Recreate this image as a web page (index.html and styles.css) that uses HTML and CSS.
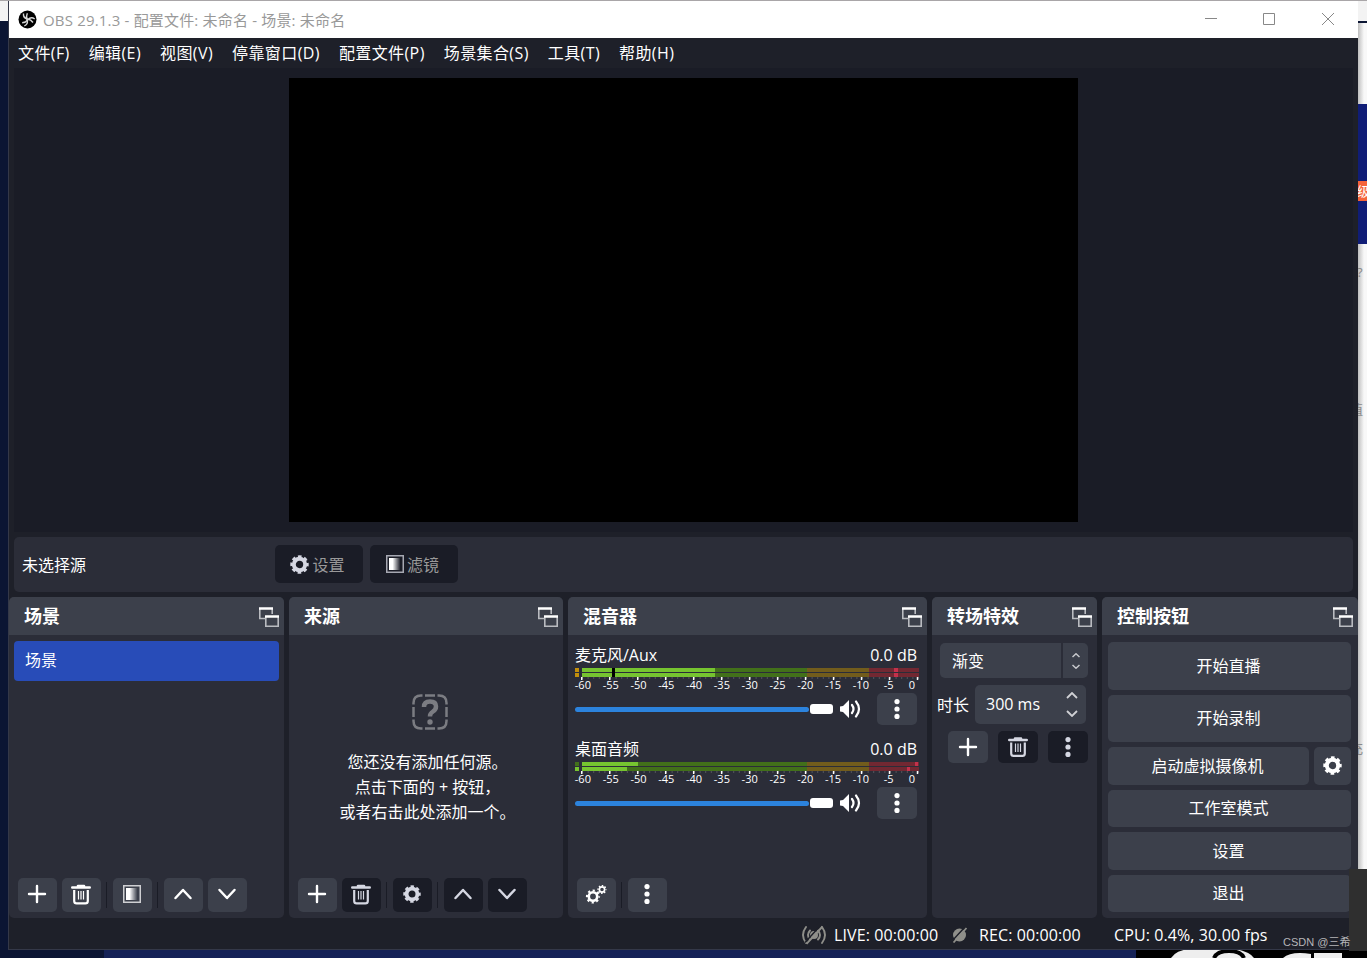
FILE: index.html
```
<!DOCTYPE html>
<html lang="zh-CN">
<head>
    <meta charset="UTF-8">
    <meta name="viewport" content="width=device-width, initial-scale=1.0">
    <title>OBS 29.1.3</title>
    <link rel="stylesheet" href="styles.css">
</head>
<body>
    <svg class="defs" width="0" height="0">
        <defs>
            <linearGradient id="fade" x1="0" x2="1" y1="0" y2="0">
                <stop offset="0.3" stop-color="currentColor"/>
                <stop offset="0.95" stop-color="currentColor" stop-opacity="0"/>
            </linearGradient>
            <symbol id="plus" viewBox="0 0 20 20"><path d="M10 2v16M2 10h16" fill="none" stroke="currentColor" stroke-width="2.4" stroke-linecap="round"/></symbol>
            <symbol id="trash" viewBox="0 0 20 20"><path d="M1.300 3h17.400M7 1.500h6" fill="none" stroke="currentColor" stroke-width="2.600" stroke-linecap="round"/><path d="M3.200 5.500v11q0 2.400 2.400 2.400h8.800q2.400 0 2.400-2.400v-11" fill="none" stroke="currentColor" stroke-width="2.200"/><path d="M7.500 6.500v8.500M10 6.500v8.500M12.500 6.500v8.500" stroke="currentColor" stroke-width="1.200"/></symbol>
            <symbol id="gear" viewBox="0 0 20 20"><circle cx="10" cy="10" r="6" fill="none" stroke="currentColor" stroke-width="4.2"/><circle cx="10" cy="10" r="8.400" fill="none" stroke="currentColor" stroke-width="2.600" stroke-dasharray="3.8 2.797" stroke-dashoffset="1.9"/></symbol>
            <symbol id="gears" viewBox="0 0 22 20"><circle cx="8" cy="12.5" r="4.2" fill="none" stroke="currentColor" stroke-width="2.6"/><circle cx="8" cy="12.5" r="6" fill="none" stroke="currentColor" stroke-width="2.2" stroke-dasharray="2.2 2.512" stroke-dashoffset="1.1"/><circle cx="17" cy="5.5" r="2.6" fill="none" stroke="currentColor" stroke-width="1.6"/><circle cx="17" cy="5.5" r="3.9" fill="none" stroke="currentColor" stroke-width="1.4" stroke-dasharray="1.5 1.563" stroke-dashoffset="0.75"/></symbol>
            <symbol id="filter" viewBox="0 0 18 18"><rect x="0.750" y="0.750" width="16.500" height="16.500" fill="none" stroke="currentColor" stroke-width="1.500" opacity="0.75"/><rect x="3" y="3" width="12" height="12" fill="url(#fade)"/></symbol>
            <symbol id="up" viewBox="0 0 20 20"><path d="M2.500 14l7.500-8 7.500 8" fill="none" stroke="currentColor" stroke-width="2.5" stroke-linecap="round" stroke-linejoin="round"/></symbol>
            <symbol id="down" viewBox="0 0 20 20"><path d="M2.500 6l7.500 8 7.500-8" fill="none" stroke="currentColor" stroke-width="2.5" stroke-linecap="round" stroke-linejoin="round"/></symbol>
            <symbol id="dots" viewBox="0 0 20 20"><g fill="currentColor"><circle cx="10" cy="2.600" r="2.600"/><circle cx="10" cy="10" r="2.600"/><circle cx="10" cy="17.400" r="2.600"/></g></symbol>
            <symbol id="popout" viewBox="0 0 20 20"><path d="M.8 2v9.500H6M13.200 2v5M6.800 10v9.200h12.400V10" fill="none" stroke="#b9bbc0" stroke-width="1.600"/><path d="M0 1.500h14M6 9.500h14" stroke="#fff" stroke-width="2.600"/></symbol>
            <symbol id="speaker" viewBox="0 0 21 18"><path d="M0 6.500l3-.5 6-6v18l-6-6-3-.5z" fill="currentColor"/><path d="M12 5q3 4 0 8M16 1.500q6 7.500 0 15" fill="none" stroke="currentColor" stroke-width="2.200" stroke-linecap="round"/></symbol>
        </defs>
    </svg>

    <div class="desktop">
        <div class="back-top"></div>
        <div class="back-page">
            <span class="banner">级</span>
            <span class="q1">?</span>
            <span class="q2">值</span>
            <span class="q3">充</span>
        </div>
        <div class="back-bottom"></div>
        <svg class="back-logo" width="231" height="9" viewBox="0 0 231 9"><rect width="231" height="9" fill="#000"/><path d="M35 9Q40 1 54 0h46q14 3 18 9z" fill="#eee"/><path d="M78 9q3-7 15-7t15 7" fill="none" stroke="#000" stroke-width="4"/><path d="M86 9q7-6 14 0zM147 9q8-7 28-4v4zM178 4h28v5h-28z" fill="#eee"/></svg>

        <div class="window">
            <div class="titlebar">
                <svg class="logo" width="19" height="19" viewBox="0 0 19 19"><circle cx="9.500" cy="9.500" r="9" fill="#000"/><g fill="none" stroke="#d8d8d8" stroke-width="1.400"><path id="blade" d="M5.500 3.500q-.5 4.500 4 5.500q3.500.5 5.500 3.500"/><use href="#blade" transform="rotate(120 9.500 9.500)"/><use href="#blade" transform="rotate(240 9.500 9.500)"/></g></svg>
                <span class="title">OBS 29.1.3 - 配置文件: 未命名 - 场景: 未命名</span>
                <svg class="win-btns" width="130" height="12" viewBox="0 0 130 12"><path d="M0 5.500h12M58.500.5h11v11h-11zM117 0l12 12M129 0l-12 12" fill="none" stroke="#888" stroke-width="1"/></svg>
            </div>
            <div class="menubar">
                <span>文件(F)</span><span>编辑(E)</span><span>视图(V)</span><span>停靠窗口(D)</span><span>配置文件(P)</span><span>场景集合(S)</span><span>工具(T)</span><span>帮助(H)</span>
            </div>
            <div class="preview"><div class="canvas"></div></div>
            <div class="source-bar">
                <span class="source-name">未选择源</span>
                <button class="btn off wide"><svg width="19" height="19"><use href="#gear"/></svg>设置</button>
                <button class="btn off wide"><svg width="18" height="18"><use href="#filter"/></svg>滤镜</button>
            </div>

            <div class="docks">
                <section class="dock scenes">
                    <h2>场景<svg width="20" height="20"><use href="#popout"/></svg></h2>
                    <div class="dock-body">
                        <div class="scene-item">场景</div>
                    </div>
                    <div class="tools">
                        <button class="btn"><svg width="20" height="20"><use href="#plus"/></svg></button>
                        <button class="btn"><svg width="20" height="21"><use href="#trash"/></svg></button>
                        <i class="sep"></i>
                        <button class="btn"><svg width="18" height="18"><use href="#filter"/></svg></button>
                        <i class="sep"></i>
                        <button class="btn"><svg width="20" height="20"><use href="#up"/></svg></button>
                        <button class="btn"><svg width="20" height="20"><use href="#down"/></svg></button>
                    </div>
                </section>

                <section class="dock sources">
                    <h2>来源<svg width="20" height="20"><use href="#popout"/></svg></h2>
                    <div class="dock-body empty">
                        <svg width="36" height="36" viewBox="0 0 36 36" fill="none" stroke="#7b7c82" stroke-width="2.500"><path d="M1.500 10.500V9q0-7.500 7.500-7.500h1.500M13 1.500h10M25.500 1.500H27q7.500 0 7.500 7.500v1.500M34.500 13v10M34.500 25.500V27q0 7.500-7.500 7.500h-1.500M23 34.500H13M10.500 34.500H9q-7.500 0-7.500-7.500v-1.500M1.500 23V13"/><path d="M12 13q0-5.500 6-5.500t6 5q0 3-3 5t-3 4.500v.5" stroke-width="4.500"/><circle cx="18" cy="28" r="2.700" fill="#7b7c82" stroke="none"/></svg>
                        <p>您还没有添加任何源。<br>点击下面的 + 按钮，<br>或者右击此处添加一个。</p>
                    </div>
                    <div class="tools">
                        <button class="btn"><svg width="20" height="20"><use href="#plus"/></svg></button>
                        <button class="btn off"><svg width="20" height="21"><use href="#trash"/></svg></button>
                        <i class="sep"></i>
                        <button class="btn off"><svg width="18" height="18"><use href="#gear"/></svg></button>
                        <i class="sep"></i>
                        <button class="btn off"><svg width="20" height="20"><use href="#up"/></svg></button>
                        <button class="btn off"><svg width="20" height="20"><use href="#down"/></svg></button>
                    </div>
                </section>

                <section class="dock mixer">
                    <h2>混音器<svg width="20" height="20"><use href="#popout"/></svg></h2>
                    <div class="dock-body">
                        <div class="channel">
                            <div class="ch-name"><span>麦克风/Aux</span><span>0.0 dB</span></div>
                            <svg class="meter" width="346" height="12" viewBox="0 0 346 12">
                                <g id="mic-row"><path d="M0 0h4v4H0z" fill="#c28f0c"/><path d="M7 0h133v4H7z" fill="#76c430"/><path d="M140 0h92v4h-92z" fill="#42701a"/><path d="M232 0h62v4h-62z" fill="#725c1c"/><path d="M294 0h50v4h-50z" fill="#722832"/><path d="M319 0h4v4h-4z" fill="#c4314b"/></g>
                                <use href="#mic-row" y="5"/>
                                <path d="M37 0h3v9h-3z" fill="#000"/>
                                <g id="ticks"><path d="M7 10h337" stroke="#55565d" stroke-width="2" stroke-dasharray="1 4.600"/><path d="M6 10.500h338" stroke="#fff" stroke-width="3" stroke-dasharray="1.500 26.480"/></g>
                            </svg>
                            <div class="scale"><span>-60</span><span>-55</span><span>-50</span><span>-45</span><span>-40</span><span>-35</span><span>-30</span><span>-25</span><span>-20</span><span>-15</span><span>-10</span><span>-5</span><span>0</span></div>
                            <div class="volume">
                                <div class="track"></div><div class="handle"></div>
                                <svg width="21" height="18"><use href="#speaker"/></svg>
                                <button class="btn"><svg width="20" height="20"><use href="#dots"/></svg></button>
                            </div>
                        </div>
                        <div class="channel">
                            <div class="ch-name"><span>桌面音频</span><span>0.0 dB</span></div>
                            <svg class="meter" width="346" height="12" viewBox="0 0 346 12">
                                <g id="desk-row"><path d="M0 0h4v4H0zM7 0h225v4H7z" fill="#42701a"/><path d="M232 0h62v4h-62z" fill="#725c1c"/><path d="M294 0h50v4h-50z" fill="#722832"/></g>
                                <use href="#desk-row" y="5"/>
                                <path d="M7 0h56v4H7zM0 5h4v4H0zM7 5h45v4H7z" fill="#76c430"/>
                                <path d="M340 0h3v4h-3zM332 5h3v4h-3z" fill="#c4314b"/>
                                <use href="#ticks"/>
                            </svg>
                            <div class="scale"><span>-60</span><span>-55</span><span>-50</span><span>-45</span><span>-40</span><span>-35</span><span>-30</span><span>-25</span><span>-20</span><span>-15</span><span>-10</span><span>-5</span><span>0</span></div>
                            <div class="volume">
                                <div class="track"></div><div class="handle"></div>
                                <svg width="21" height="18"><use href="#speaker"/></svg>
                                <button class="btn"><svg width="20" height="20"><use href="#dots"/></svg></button>
                            </div>
                        </div>
                    </div>
                    <div class="tools">
                        <button class="btn"><svg width="22" height="20"><use href="#gears"/></svg></button>
                        <i class="sep"></i>
                        <button class="btn"><svg width="20" height="20"><use href="#dots"/></svg></button>
                    </div>
                </section>

                <section class="dock transitions">
                    <h2>转场特效<svg width="20" height="20"><use href="#popout"/></svg></h2>
                    <div class="dock-body">
                        <div class="select"><span>渐变</span><b><svg width="8" height="16" viewBox="0 0 8 16"><path d="M.5 4L4 .8 7.500 4M.5 12L4 15.200 7.500 12" fill="none" stroke="#c8c9cd" stroke-width="1.500"/></svg></b></div>
                        <div class="duration">
                            <label>时长</label>
                            <div class="spin"><span>300 ms</span><svg width="12" height="25" viewBox="0 0 12 25"><path d="M1 6l5-5 5 5M1 19l5 5 5-5" fill="none" stroke="#d0d1d5" stroke-width="1.800"/></svg></div>
                        </div>
                        <div class="trans-btns">
                            <button class="btn"><svg width="20" height="20"><use href="#plus"/></svg></button>
                            <button class="btn off"><svg width="20" height="20"><use href="#trash"/></svg></button>
                            <button class="btn off"><svg width="20" height="20"><use href="#dots"/></svg></button>
                        </div>
                    </div>
                </section>

                <section class="dock controls">
                    <h2>控制按钮<svg width="20" height="20"><use href="#popout"/></svg></h2>
                    <div class="dock-body">
                        <button class="btn tall">开始直播</button>
                        <button class="btn tall">开始录制</button>
                        <div class="vcam">
                            <button class="btn">启动虚拟摄像机</button>
                            <button class="btn"><svg width="19" height="19"><use href="#gear"/></svg></button>
                        </div>
                        <button class="btn">工作室模式</button>
                        <button class="btn">设置</button>
                        <button class="btn">退出</button>
                    </div>
                </section>
            </div>

            <div class="statusbar">
                <svg width="24" height="20" viewBox="0 0 24 20"><g fill="none" stroke="#8f8f8a" stroke-width="1.900" stroke-linecap="round"><path d="M4 2q-6 8 0 16M8 5.500q-4 4.500 0 9M16 5.500q4 4.500 0 9M20 2q6 8 0 16"/></g><circle cx="12" cy="10" r="4" fill="#8f8f8a"/><path d="M3 17.500L18.500.5" stroke="#1e2029" stroke-width="1.500"/><path d="M4.500 18.800L20.500 1.500" stroke="#8f8f8a" stroke-width="1.900"/></svg>
                <span class="live">LIVE: 00:00:00</span>
                <svg width="15" height="16" viewBox="0 0 15 16"><circle cx="7.500" cy="8" r="6.500" fill="#8f8f8a"/><path d="M0 14L13 0" stroke="#1e2029" stroke-width="1.500"/><path d="M1.500 15.500L14.500 1" stroke="#8f8f8a" stroke-width="1.800"/></svg>
                <span class="rec">REC: 00:00:00</span>
                <span class="cpu">CPU: 0.4%, 30.00 fps</span>
            </div>
        </div>

        <div class="corner"></div>
        <span class="watermark">CSDN @三希</span>
    </div>
</body>
</html>
```
FILE: styles.css
```
* {
    box-sizing: border-box;
}

body {
    margin: 0;
    font-family: "Open Sans", "Noto Sans CJK SC", sans-serif;
    font-size: 16px;
    color: #fff;
    overflow: hidden;
}

.defs {
    position: absolute;
}

.desktop {
    position: relative;
    width: 1367px;
    height: 958px;
    background: #0b1533;
    overflow: hidden;
}

/* things behind the window */
.back-top {
    position: absolute;
    left: 0;
    top: 0;
    width: 1367px;
    height: 21px;
    background: linear-gradient(#a9a6a8 1px, #f3f3f3 1px);
}

.back-page {
    position: absolute;
    left: 1357px;
    top: 23px;
    width: 10px;
    height: 846px;
    background: linear-gradient(90deg, #b5b5b5, #f8f8f8 7px);
    color: #888;
    font-size: 13px;
    overflow: hidden;
}

.back-page::before {
    content: "";
    position: absolute;
    top: 81px;
    width: 10px;
    height: 140px;
    background: #101d76;
}

.back-page span {
    position: absolute;
    line-height: 20px;
}

.back-page .banner {
    top: 158px;
    left: 0;
    width: 10px;
    background: #f4633a;
    color: #fff;
}

.back-page .q1 { top: 239px; left: 0; }
.back-page .q2 { top: 376px; left: -7px; }
.back-page .q3 { top: 715px; left: -7px; }

.back-bottom {
    position: absolute;
    left: 104px;
    bottom: 0;
    width: 1032px;
    height: 9px;
    background: #152257;
}

.back-logo {
    position: absolute;
    left: 1136px;
    bottom: 0;
}

.corner {
    position: absolute;
    left: 1349px;
    top: 869px;
    width: 18px;
    height: 82px;
    background: #2f2f2f;
}

.watermark {
    position: absolute;
    left: 1283px;
    top: 933px;
    font-size: 11px;
    line-height: 18px;
    color: #b5b5b8;
    white-space: nowrap;
    font-family: "Liberation Sans", "Noto Sans CJK SC", sans-serif;
}

/* main window */
.window {
    position: absolute;
    left: 8px;
    top: 1px;
    width: 1350px;
    height: 949px;
    border-left: 1px solid #343848;
    border-bottom: 1px solid #343848;
    background: #1e2029;
    display: flex;
    flex-direction: column;
}

.titlebar {
    height: 37px;
    background: #fff;
    display: flex;
    align-items: center;
    padding: 0 23px 1px 9px;
}

.title {
    margin-left: 6px;
    font-size: 15px;
    letter-spacing: 0.18px;
    color: #999;
    flex: 1;
}

.menubar {
    height: 30px;
    display: flex;
    align-items: center;
    gap: 19px;
    padding: 0 0 2px 9px;
    letter-spacing: 0.4px;
    white-space: nowrap;
}

.preview {
    height: 464px;
    margin: 0 5px;
    padding: 10px 0 0 275px;
    background: #1a1c26;
}

.canvas {
    width: 789px;
    height: 444px;
    background: #000;
}

.source-bar {
    height: 55px;
    margin: 5px 5px;
    padding: 0 0 1px 8px;
    background: #2b2d38;
    border-radius: 5px;
    display: flex;
    align-items: center;
    gap: 7px;
}

.source-name {
    width: 246px;
}

.btn {
    display: flex;
    align-items: center;
    justify-content: center;
    border: none;
    padding: 0;
    border-radius: 5px;
    background: #3c404b;
    color: #fff;
    font: inherit;
    white-space: nowrap;
}

.btn.off {
    background: #1a1c26;
    color: #d5d7e2;
}

.btn.wide {
    width: 88px;
    height: 38px;
    gap: 3px;
    padding-right: 3px;
    color: #999;
}

.btn.wide svg {
    color: #d5d7e2;
}

.docks {
    height: 321px;
    display: flex;
    gap: 5px;
}

.dock {
    display: flex;
    flex-direction: column;
    background: #2b2d38;
    border-radius: 5px;
    overflow: hidden;
}

.scenes { width: 275px; }
.sources { width: 274px; }
.mixer { width: 359px; }
.transitions { width: 165px; }
.controls { width: 256px; }

.dock h2 {
    margin: 0;
    height: 38px;
    padding: 0 5px 2px 15px;
    display: flex;
    align-items: center;
    justify-content: space-between;
    background: #3c404b;
    font-size: 18px;
    font-weight: bold;
}

.dock h2 svg {
    margin-top: 4px;
}

.dock-body {
    flex: 1;
}

.scene-item {
    margin: 6px 5px;
    height: 40px;
    line-height: 39px;
    padding-left: 11px;
    background: #284cb8;
    border-radius: 4px;
}

.tools {
    display: flex;
    align-items: center;
    gap: 5px;
    height: 34px;
    margin: 0 9px 6px;
}

.tools .btn {
    width: 39px;
    height: 34px;
    padding: 0 1px 2px 0;
}

.sep {
    width: 1px;
    height: 26px;
    margin-right: 1px;
    background: #1a1c26;
}

.empty {
    display: flex;
    flex-direction: column;
    align-items: center;
    padding: 59px 0 0 3px;
}

.empty svg {
    margin-left: 5px;
}

.empty p {
    margin: 20px 0 0;
    line-height: 25px;
    text-align: center;
}

.mixer .dock-body {
    padding: 8px 10px 0 7px;
}

.channel {
    height: 94px;
}

.ch-name {
    height: 25px;
    line-height: 24px;
    display: flex;
    justify-content: space-between;
}

.meter {
    display: block;
}

.scale {
    display: grid;
    grid-template-columns: repeat(13, 27.8px);
    margin-left: -6px;
    height: 13px;
    line-height: 10px;
    font-size: 11px;
    text-align: center;
}

.scale span:last-child {
    padding-right: 9px;
}

.volume {
    display: flex;
    align-items: center;
    height: 32px;
}

.track {
    width: 234px;
    height: 5px;
    border-radius: 3px;
    background: #2c83dd;
}

.handle {
    width: 23px;
    height: 10px;
    margin: 0 7px 0 1px;
    border-radius: 3px;
    background: #fff;
}

.volume .btn {
    width: 40px;
    height: 32px;
    margin-left: auto;
}

.transitions .dock-body {
    padding: 8px 9px 0 5px;
}

.select {
    display: flex;
    gap: 2px;
    height: 35px;
    margin-left: 3px;
    line-height: 36px;
}

.select span {
    width: 121px;
    padding-left: 12px;
    background: #3c404b;
    border-radius: 5px 0 0 5px;
}

.select b {
    flex: 1;
    display: flex;
    align-items: center;
    justify-content: center;
    background: #3c404b;
    border-radius: 0 5px 5px 0;
}

.duration {
    display: flex;
    align-items: center;
    gap: 6px;
    margin-top: 7px;
}

.duration label,
.spin span {
    padding-bottom: 2px;
}

.spin {
    width: 111px;
    height: 39px;
    padding: 0 8px 0 11px;
    display: flex;
    align-items: center;
    justify-content: space-between;
    background: #3c404b;
    border-radius: 5px;
}

.trans-btns {
    display: flex;
    gap: 10px;
    margin: 7px 0 0 11px;
}

.trans-btns .btn {
    width: 40px;
    height: 32px;
}

.controls .dock-body {
    display: flex;
    flex-direction: column;
    gap: 5px;
    padding: 7px 7px 6px 6px;
}

.controls .btn {
    height: 37.5px;
    padding: 0 2px 2px 0;
}

.controls .tall {
    height: 47.5px;
}

.vcam {
    display: grid;
    grid-template-columns: 1fr 37px;
    gap: 5px;
}

.vcam .btn:last-child {
    padding: 0;
}

.statusbar {
    flex: 1;
    display: flex;
    align-items: center;
    padding: 3px 0 0 793px;
    white-space: nowrap;
    letter-spacing: 0.1px;
}

.live {
    width: 111px;
    margin-left: 8px;
}

.live + svg {
    margin-left: 7px;
}

.rec {
    width: 122px;
    margin-left: 12px;
}

.cpu {
    margin-left: 13px;
}
```
